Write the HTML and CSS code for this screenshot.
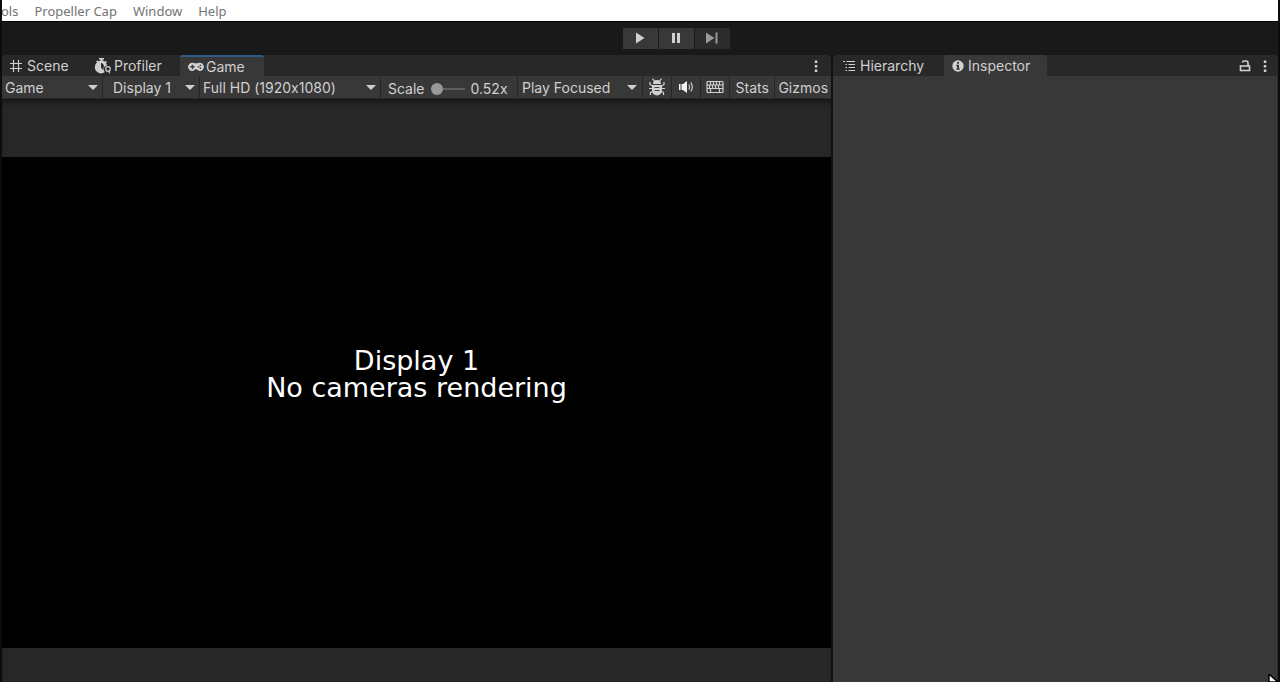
FILE: index.html
```html
<!DOCTYPE html>
<html lang="en">
<head>
<meta charset="utf-8">
<title>Editor</title>
<link rel="stylesheet" href="styles.css">
</head>
<body>
<nav class="menubar">
  <button class="menu menu-cut">ols</button>
  <button class="menu">Propeller Cap</button>
  <button class="menu">Window</button>
  <button class="menu">Help</button>
</nav>
<header class="playbar">
  <button class="play" aria-label="Play"><svg width="14" height="14" viewBox="0 0 14 14"><path d="M3 1.5 11.500 7 3 12.500z"/></svg></button>
  <button class="play" aria-label="Pause"><svg width="14" height="14" viewBox="0 0 14 14"><path d="M3 2h3v10H3zM8 2h3v10H8z"/></svg></button>
  <button class="play play-off" aria-label="Step"><svg width="14" height="14" viewBox="0 0 14 14"><path d="M1 1.500 9.500 7 1 12.500zM10.500 1.500h2v11h-2z"/></svg></button>
</header>
<main class="workspace">
  <section class="dock dock-game">
    <div class="tabs">
      <button class="tab tab-scene"><svg width="14" height="14" viewBox="0 0 14 14"><path class="line" d="M4.500 1v12M9.500 1v12M1 4.500h12M1 9.500h12"/></svg>Scene</button>
      <button class="tab tab-profiler"><svg width="17" height="16" viewBox="0 0 17 16"><path fill-rule="evenodd" d="M4 0h5v1.500H7.500V2.600A6 6 0 0 1 10 3.700L11 2.800 12 4 11 5A6 6 0 0 1 12 7.600c-2 .2-3.300 1.800-3.300 3.600 0 1.300.5 2.200 1.200 2.900A6 6 0 1 1 2.200 4.300L1 3.600 2 2.400l1.500.9L5.500 2.600V1.500H4zM6 5v4.500L8 12l1-4.500L7 5z"/><circle class="line" cx="13" cy="11" r="2.300"/><path class="line" d="M14.300 12.500v3"/></svg>Profiler</button>
      <button class="tab tab-game active focused"><svg width="16" height="12" viewBox="0 0 17 12"><path fill-rule="evenodd" d="M4.500 1.500C6 1.500 6.500 2 7.500 2h2c1 0 1.500-.5 3-.5a4.300 4.300 0 0 1 0 8.800c-1.800 0-2.500-1.800-4-1.800s-2.200 1.800-4 1.800a4.300 4.300 0 0 1 0-8.800zM4 3.500V5H2.500v1.500H4V8h1.500V6.500H7V5H5.500V3.500zM12.500 3.500V5H14V3.500zM10.500 5v1.500H12V5zM12.500 6.500V8H14V6.500z"/></svg>Game</button>
      <span class="spacer"></span>
      <button class="mini" aria-label="Game options"><svg width="4" height="14" viewBox="0 0 4 14"><path d="M.8 1.500h2.500V4H.8zM.8 6h2.500v2.500H.8zM.8 10.500h2.500V13H.8z"/></svg></button>
    </div>
    <div class="tools">
      <span class="drop drop-view"><select aria-label="View"><option>Game</option></select></span>
      <span class="drop drop-display"><select aria-label="Display"><option>Display 1</option></select></span>
      <span class="drop drop-size"><select aria-label="Resolution"><option>Full HD (1920x1080)</option></select></span>
      <span class="scale"><label for="scale">Scale</label><input id="scale" type="range" min="0" max="100" value="0"><output for="scale">0.52x</output></span>
      <span class="drop drop-focus"><select aria-label="Play mode"><option>Play Focused</option></select></span>
      <button class="tool" aria-label="Debug"><svg width="18" height="18" viewBox="0 0 18 18"><path d="M5 6a4 4 0 0 1 8 0zM4 7h10v5.500a5 5 0 0 1-10 0z"/><path class="line" d="M6.500 3 4.500.8M11.500 3l2-2.200M4.500 8 2 6.500V4M13.500 8 16 6.500V4M4.500 10.500H1M13.500 10.500H17M5 13.500l-2.500 1V17M13 13.500l2.500 1V17"/><path class="cut" d="M6.500 9.500h5M6.500 12.500h5"/></svg></button>
      <button class="tool" aria-label="Mute"><svg class="bright" width="16" height="14" viewBox="0 0 16 14"><path d="M1 4h1.500v6H1zM3.500 4H5L9 1v12L5 10H3.500z"/><path class="line" d="M10.800 4.500q1.500 2.500 0 5M12.800 2.500q3 4.500 0 9"/></svg></button>
      <button class="tool" aria-label="Keyboard shortcuts"><svg width="18" height="14" viewBox="0 0 18 14"><rect class="line" x="1" y="1.500" width="16" height="11" rx="1"/><path class="line" d="M1 5h16M1 8.500h16M4.500 1.500V5M7.500 1.500V5M10.500 1.500V5M13.500 1.500V5M3.500 5v3.500M6.500 5v3.500M9.500 5v3.500M12.500 5v3.500M4.500 8.500v4M13.500 8.500v4"/></svg></button>
      <button class="tool tool-text">Stats</button>
      <button class="tool tool-text">Gizmos</button>
    </div>
    <div class="stage">
      <div class="screen"><p class="notice">Display 1<br>No cameras rendering</p></div>
    </div>
  </section>
  <section class="dock dock-inspector">
    <div class="tabs">
      <button class="tab tab-hierarchy"><svg width="14" height="12" viewBox="0 0 14 12"><path class="line" d="M1 1.500h2M4.500 1.500H13M3.500 4.500H5M6.500 4.500H13M3.500 7.500H5M6.500 7.500H13M3.500 10.500H5M6.500 10.500H13"/></svg>Hierarchy</button>
      <button class="tab tab-inspector active"><svg width="12" height="12" viewBox="0 0 12 12"><circle cx="6" cy="6" r="5.700"/><path class="hole" d="M5 2h2v1.800H5zM4.300 4.800H7v3.700h.8v1.200H4.300V8.500H5V6h-.7z"/></svg>Inspector</button>
      <span class="spacer"></span>
      <button class="mini" aria-label="Lock"><svg width="12" height="14" viewBox="0 0 12 14"><rect class="line thick" x="1.500" y="7" width="9" height="4.500"/><path class="line thick" d="M9 7V4q0-2-2-2H5Q3.500 2 3.500 3.500"/></svg></button>
      <button class="mini" aria-label="Inspector options"><svg width="4" height="14" viewBox="0 0 4 14"><path d="M.8 1.500h2.500V4H.8zM.8 6h2.500v2.500H.8zM.8 10.500h2.500V13H.8z"/></svg></button>
    </div>
    <div class="inspector-body"></div>
  </section>
</main>
<svg class="pointer" width="12" height="8" viewBox="0 0 12 8"><path d="M1 0v8h9z" fill="#fff" stroke="#000" stroke-width="1.500"/></svg>
</body>
</html>
```
FILE: styles.css
```css
* { box-sizing: border-box; }
body {
  margin: 0;
  height: 100vh;
  overflow: hidden;
  display: flex;
  flex-direction: column;
  border: solid #0c0c0c;
  border-width: 0 2px;
  background: #191919;
  color: #d0d0d0;
  font: 14px/20px Inter, sans-serif;
  font-variant-ligatures: no-contextual;
}
button, select, input { font: inherit; font-variant-ligatures: inherit; color: inherit; margin: 0; padding: 0; border: 0; border-radius: 0; background: none; }
svg { display: block; flex: none; fill: #d0d0d0; }
.line { fill: none; stroke: #d0d0d0; stroke-width: 1.2; }
.thick { stroke-width: 1.6; }
.cut { fill: none; stroke: #444; }
.hole { fill: #383838; }
.bright { fill: #f2f2f2; }

.menubar {
  flex: none;
  display: flex;
  height: 21px;
  background: #fff;
  color: #737373;
  font: 13px/20px "Noto Sans", sans-serif;
}
.menu { padding: 0 8px; }
.menu-cut { padding-left: 0; margin-left: -1px; }

.playbar {
  flex: none;
  display: flex;
  justify-content: center;
  align-items: center;
  gap: 1px;
  height: 34px;
  padding: 0 0 1px 72px;
  border-top: 1px solid #000;
}
.play { display: grid; place-items: center; width: 35px; height: 21px; background: #383838; }
.play-off { background: #2c2c2c; }
.play-off svg { fill: #999; }

.workspace { flex: 1; min-height: 0; display: flex; gap: 2px; background: #111; }
.dock { min-width: 0; display: flex; flex-direction: column; }
.dock-game { flex: 829 1 0; }
.dock-inspector { flex: 445 1 0; }
.tabs { flex: none; display: flex; height: 21px; background: #282828; border-radius: 3px 3px 0 0; overflow: hidden; }
.tab { display: flex; align-items: center; padding: 1px 8px 0; gap: 4px; white-space: nowrap; }
.active { background: #383838; border-radius: 3px 3px 0 0; }
.focused { border-top: 2px solid #2f5b85; padding-top: 0; }
.tab-scene { width: 85px; padding-left: 7px; }
.tab-profiler { width: 93px; gap: 2px; }
.tab-game { width: 84px; gap: 2px; }
.tab-hierarchy { width: 111px; padding-left: 9px; }
.tab-inspector { width: 103px; }
.spacer { flex: 1; }
.mini { display: flex; align-items: center; padding: 0 5px 0 3px; margin-right: 5px; }
.mini + .mini { margin-right: 6px; padding-left: 2px; }
.dock-game .mini { margin-right: 8px; }

.tools { flex: none; display: flex; height: 23px; background: #383838; border-bottom: 1px solid #282828; }
.drop { position: relative; display: flex; border-right: 1px solid #262626; }
.drop::after {
  content: "";
  position: absolute;
  right: 4px;
  top: 9px;
  border: 5px solid transparent;
  border-top-color: #d0d0d0;
  border-bottom: 0;
  pointer-events: none;
}
.drop select { appearance: none; width: 100%; height: 24px; padding-left: 3px; outline: 0; }
.drop-view { width: 101px; }
.drop-display { width: 97px; }
.drop-display select { padding-left: 10px; }
.drop-size { width: 181px; }
.drop-focus { width: 125px; }
.drop-focus select { padding-left: 4px; }
.drop-focus::after { right: 5px; }
.scale { display: flex; align-items: center; width: 137px; padding: 3px 0 0 7px; gap: 6px; border-right: 1px solid #262626; }
.scale input { appearance: none; width: 34px; height: 12px; }
.scale input::-webkit-slider-runnable-track { height: 12px; background: linear-gradient(#5e5e5e, #5e5e5e) center / 100% 2px no-repeat; }
.scale input::-webkit-slider-thumb { appearance: none; width: 12px; height: 12px; border-radius: 50%; background: #999; }
.tool { display: grid; place-items: center; width: 29px; border-right: 1px solid #262626; }
.tool-text { flex: 4 1 0; width: auto; padding-top: 1px; }
.tool-text:last-child { flex-grow: 5; border-right: 0; }

.stage { flex: 1; min-height: 0; display: flex; padding: 58px 0 34px; background: #282828; box-shadow: inset 0 6px 8px -4px #111; }
.screen { flex: 1; display: grid; place-items: center; background: #000; }
.notice { margin: 0 0 58px; text-align: center; color: #fff; font: 27px/27px "DejaVu Sans", sans-serif; }
.inspector-body { flex: 1; background: #383838; border-right: 1px solid #2c2c2c; }
.pointer { position: absolute; right: 0; bottom: 0; }
```
